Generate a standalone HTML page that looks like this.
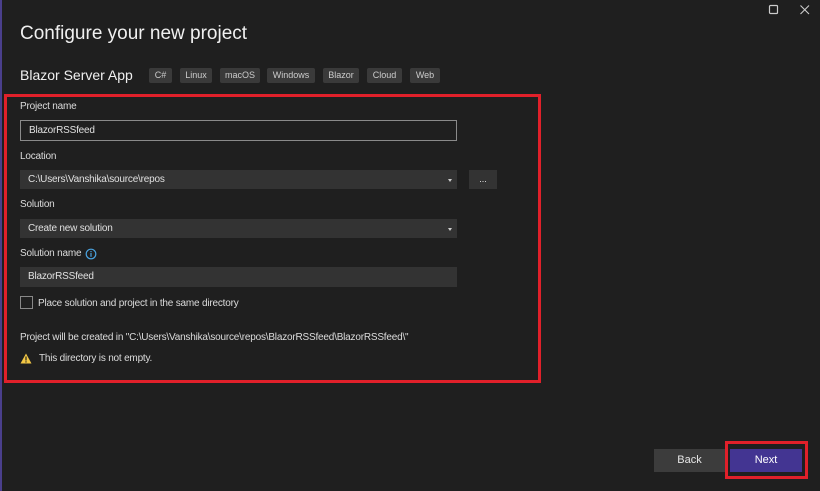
<!DOCTYPE html>
<html><head><meta charset="utf-8"><style>
*{margin:0;padding:0;box-sizing:border-box}
body{width:820px;height:491px;background:#1f1f1f;font-family:"Liberation Sans",sans-serif;color:#e6e6e6;position:relative;overflow:hidden}
.a{position:absolute}
.edge{left:0;top:0;width:2px;height:491px;background:#4a3f8c}
.t{font-size:10px;color:#dcdcdc;letter-spacing:-0.2px}
.tag{position:absolute;top:68px;height:15px;background:#3a3a3a;border-radius:2px;font-size:9px;color:#ccc;text-align:center;line-height:15px}
.box{position:absolute;left:20px;width:437px;height:20px;background:#333;font-size:10px;line-height:20px;padding-left:8px;color:#e0e0e0;letter-spacing:-0.2px}
.dd::after{content:"";position:absolute;right:5px;top:9px;border:2.5px solid transparent;border-top:3px solid #ccc}
</style></head><body>
<div class="a edge"></div>
<div class="a" style="left:20px;top:23px;font-size:19px;color:#f0f0f0">Configure your new project</div>
<div class="a" style="left:20px;top:67px;font-size:14px;color:#f0f0f0">Blazor Server App</div>
<div class="tag" style="left:149px;width:23px">C#</div>
<div class="tag" style="left:180px;width:32px">Linux</div>
<div class="tag" style="left:220px;width:40px">macOS</div>
<div class="tag" style="left:267px;width:48px">Windows</div>
<div class="tag" style="left:323px;width:36px">Blazor</div>
<div class="tag" style="left:367px;width:35px">Cloud</div>
<div class="tag" style="left:410px;width:30px">Web</div>
<div class="a" style="left:4px;top:94px;width:537px;height:289px;border:3px solid #e0202a"></div>
<div class="a t" style="left:20px;top:101px">Project name</div>
<div class="box" style="top:120px;height:21px;background:#1f1f1f;border:1px solid #8a8a8a;line-height:19px">BlazorRSSfeed</div>
<div class="a t" style="left:20px;top:151px">Location</div>
<div class="box dd" style="top:170px;height:19px;line-height:19px">C:\Users\Vanshika\source\repos</div>
<div class="a" style="left:469px;top:170px;width:28px;height:19px;background:#333;font-size:9px;text-align:center;line-height:19px">...</div>
<div class="a t" style="left:20px;top:199px">Solution</div>
<div class="box dd" style="top:219px;height:19px;line-height:19px">Create new solution</div>
<div class="a t" style="left:20px;top:248px">Solution name</div>
<svg class="a" style="left:85px;top:248px" width="12" height="12"><circle cx="6" cy="6" r="4.8" fill="none" stroke="#4aa3e0" stroke-width="1.2"/><rect x="5.4" y="5" width="1.2" height="3.8" fill="#4aa3e0"/><rect x="5.4" y="3" width="1.2" height="1.2" fill="#4aa3e0"/></svg>
<div class="box" style="top:267px">BlazorRSSfeed</div>
<div class="a" style="left:20px;top:296px;width:13px;height:13px;border:1px solid #888"></div>
<div class="a t" style="left:38px;top:298px">Place solution and project in the same directory</div>
<div class="a t" style="left:20px;top:332px">Project will be created in "C:\Users\Vanshika\source\repos\BlazorRSSfeed\BlazorRSSfeed\"</div>
<svg class="a" style="left:20px;top:353px" width="12" height="11"><path d="M6 0.5L11.5 10.5H0.5Z" fill="#f2c744"/><rect x="5.4" y="3.5" width="1.2" height="4" fill="#222"/><rect x="5.4" y="8.3" width="1.2" height="1.2" fill="#222"/></svg>
<div class="a t" style="left:39px;top:353px">This directory is not empty.</div>
<svg class="a" style="left:768px;top:4px" width="12" height="12"><rect x="1.5" y="1.5" width="8" height="8" rx="1" fill="none" stroke="#ccc" stroke-width="1.2"/></svg>
<svg class="a" style="left:799px;top:4px" width="12" height="12"><path d="M1.5 1.5L10 10M10 1.5L1.5 10" stroke="#ccc" stroke-width="1.1"/></svg>
<div class="a" style="left:654px;top:449px;width:71px;height:23px;background:#3c3c3c;font-size:11px;text-align:center;line-height:23px">Back</div>
<div class="a" style="left:725px;top:441px;width:83px;height:38px;border:3px solid #e0202a"></div>
<div class="a" style="left:730px;top:449px;width:72px;height:23px;background:#433592;font-size:11px;text-align:center;line-height:23px;color:#fff">Next</div>
</body></html>
